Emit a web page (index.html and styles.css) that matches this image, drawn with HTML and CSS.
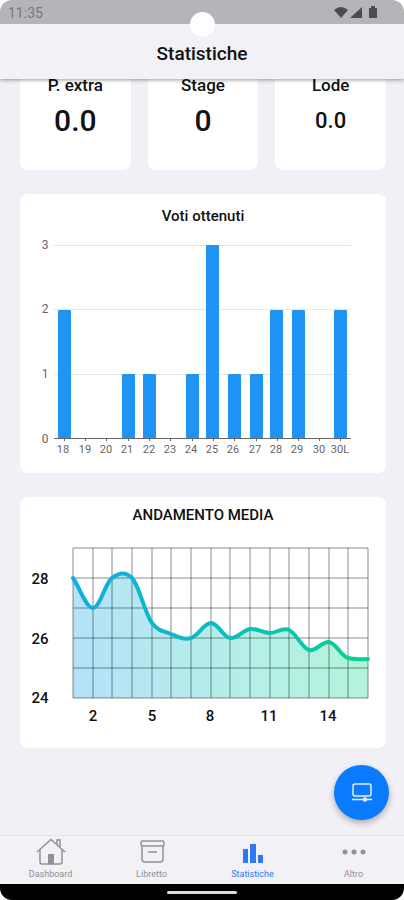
FILE: index.html
```
<!DOCTYPE html>
<html lang="it">
<head>
<meta charset="utf-8">
<meta name="viewport" content="width=device-width, initial-scale=1">
<title>Statistiche</title>
<link rel="stylesheet" href="styles.css">
</head>
<body>
<div class="screen">
  <div class="status">
    <span>11:35</span>
    <svg class="status-icons" width="46" height="16" viewBox="0 0 46 16" aria-hidden="true">
      <path d="M2 5Q9 -1 16 5L9 13Z"/>
      <path d="M30 2V13H18Z"/>
      <path d="M37 3h2V1h4v2h2v10h-8Z"/>
    </svg>
    <i class="camera"></i>
  </div>
  <header class="header"><h1>Statistiche</h1></header>

  <main class="content">
    <section class="stats">
      <article class="card stat"><h2>P. extra</h2><p>0.0</p></article>
      <article class="card stat"><h2>Stage</h2><p>0</p></article>
      <article class="card stat"><h2>Lode</h2><p class="small">0.0</p></article>
    </section>

    <section class="card grades">
      <h2>Voti ottenuti</h2>
      <svg class="chart" viewBox="0 0 366 245" role="img" aria-label="Voti ottenuti">
        <path class="rule" d="M34 17.500H331M34 81.500H331M34 146.500H331"/>
        <g class="bars">
          <path d="M38 211V83q0-1 1-1h11q1 0 1 1V211Z"/>
          <path d="M102 211V147q0-1 1-1h11q1 0 1 1V211Z"/>
          <path d="M123 211V147q0-1 1-1h11q1 0 1 1V211Z"/>
          <path d="M166 211V147q0-1 1-1h11q1 0 1 1V211Z"/>
          <path d="M186 211V18q0-1 1-1h11q1 0 1 1V211Z"/>
          <path d="M208 211V147q0-1 1-1h11q1 0 1 1V211Z"/>
          <path d="M230 211V147q0-1 1-1h11q1 0 1 1V211Z"/>
          <path d="M250 211V83q0-1 1-1h11q1 0 1 1V211Z"/>
          <path d="M272 211V83q0-1 1-1h11q1 0 1 1V211Z"/>
          <path d="M314 211V83q0-1 1-1h11q1 0 1 1V211Z"/>
        </g>
        <path class="axis" d="M34 210.500H331M44.500 211v2M65.500 211v2M86.500 211v2M108.500 211v2M129.500 211v2M150.500 211v2M172.500 211v2M193.500 211v2M214.500 211v2M236.500 211v2M257.500 211v2M278.500 211v2M299.500 211v2M320.500 211v2"/>
        <g class="values">
          <text x="25" y="21">3</text><text x="25" y="85">2</text><text x="25" y="150">1</text><text x="25" y="215">0</text>
        </g>
        <g class="ticks">
          <text x="43" y="225">18</text><text x="65" y="225">19</text><text x="86" y="225">20</text><text x="107" y="225">21</text><text x="129" y="225">22</text><text x="150" y="225">23</text><text x="171" y="225">24</text><text x="192" y="225">25</text><text x="213" y="225">26</text><text x="235" y="225">27</text><text x="256" y="225">28</text><text x="277" y="225">29</text><text x="299" y="225">30</text><text x="320" y="225">30L</text>
        </g>
      </svg>
    </section>

    <section class="card trend">
      <h2>ANDAMENTO MEDIA</h2>
      <svg class="chart" viewBox="0 0 366 221" role="img" aria-label="Andamento media">
        <defs>
          <linearGradient id="line" gradientUnits="userSpaceOnUse" x1="53" y1="0" x2="348" y2="0">
            <stop offset="0" stop-color="#12aee2"/><stop offset=".5" stop-color="#0bbdbd"/><stop offset="1" stop-color="#07d292"/>
          </linearGradient>
          <linearGradient id="area" gradientUnits="userSpaceOnUse" x1="53" y1="171" x2="348" y2="130">
            <stop offset="0" stop-color="#b4e1fa"/><stop offset=".3" stop-color="#b5e9ef"/><stop offset=".6" stop-color="#b5efe8"/><stop offset="1" stop-color="#b3f3da"/>
          </linearGradient>
        </defs>
        <path fill="url(#area)" d="M53 51C60 61 66 81 73 81S85 56 92 51S105 44 112 51S125 87 132 96S144 104 151 107S164 113 171 111S184 96 191 96S203 110 210 111S223 103 230 102S243 106 250 106S262 100 269 103S282 121 289 123S302 114 309 115S321 129 328 131S341 132 348 132V171H53Z"/>
        <path class="grid" d="M53 21H348M53 51H348M53 81H348M53 111H348M53 141H348M53 171H348M53 21V171M73 21V171M92 21V171M112 21V171M132 21V171M151 21V171M171 21V171M191 21V171M210 21V171M230 21V171M250 21V171M269 21V171M289 21V171M309 21V171M328 21V171M348 21V171"/>
        <path class="line" d="M53 51C60 61 66 81 73 81S85 56 92 51S105 44 112 51S125 87 132 96S144 104 151 107S164 113 171 111S184 96 191 96S203 110 210 111S223 103 230 102S243 106 250 106S262 100 269 103S282 121 289 123S302 114 309 115S321 129 328 131S341 132 348 132"/>
        <g class="labels">
          <text x="20" y="57">28</text><text x="20" y="117">26</text><text x="20" y="176">24</text>
          <text x="73" y="194">2</text><text x="132" y="194">5</text><text x="190" y="194">8</text><text x="249" y="194">11</text><text x="308" y="194">14</text>
        </g>
      </svg>
    </section>

    <button class="fab" type="button" aria-label="Cambia grafico">
      <svg width="24" height="24" viewBox="0 0 24 24" aria-hidden="true">
        <rect x="3" y="3" width="18" height="12" rx="2"/>
        <path d="M2 18.500H22"/><circle cx="15" cy="18.500" r="1.500"/>
      </svg>
    </button>
  </main>

  <nav class="tabs">
    <a href="#dashboard">
      <svg width="30" height="30" viewBox="0 0 30 30" aria-hidden="true">
        <path d="M1 16L15 3.500L29 16M4 14V26q0 2 2 2H24q2 0 2-2V14M21 8V4h3v7"/>
        <path class="solid" d="M12 18h6v10h-6Z"/>
      </svg>
      <span>Dashboard</span>
    </a>
    <a href="#libretto">
      <svg width="30" height="30" viewBox="0 0 30 30" aria-hidden="true">
        <rect x="4" y="5" width="23" height="5" rx="1.500"/>
        <path d="M5 10V23q0 3 3 3H23q3 0 3-3V10M11 16h9"/>
      </svg>
      <span>Libretto</span>
    </a>
    <a class="active" href="#statistiche">
      <svg width="30" height="30" viewBox="0 0 30 30" aria-hidden="true">
        <path class="solid" d="M5 13h5v14h-5ZM12 8h6v19h-6ZM20 19h5v8h-5Z"/>
      </svg>
      <span>Statistiche</span>
    </a>
    <a href="#altro">
      <svg width="30" height="30" viewBox="0 0 30 30" aria-hidden="true">
        <g class="dots"><circle cx="6" cy="16" r="2.500"/><circle cx="15" cy="16" r="2.500"/><circle cx="24" cy="16" r="2.500"/></g>
      </svg>
      <span>Altro</span>
    </a>
  </nav>
  <div class="system"><i></i></div>
</div>
</body>
</html>
```
FILE: styles.css
```
* { box-sizing: border-box; }
body { margin: 0; background: #fff; color: #111; font-family: Roboto, "Liberation Sans", sans-serif; }
h1, h2, p { margin: 0; font-weight: 500; text-align: center; }
.screen {
  display: flex;
  flex-direction: column;
  height: 100vh;
  overflow: hidden;
  border-radius: 12px;
  background: #f0f0f6;
}
.status {
  position: relative;
  z-index: 3;
  display: flex;
  flex: none;
  align-items: center;
  justify-content: space-between;
  height: 24px;
  padding: 2px 26px 0 8px;
  background: #b4b4b9;
  color: #78787c;
  font-size: 14px;
}
.status-icons { fill: #4c4c50; }
.camera {
  position: absolute;
  top: 12px;
  left: 50%;
  width: 25px;
  height: 25px;
  margin-left: -12px;
  border-radius: 50%;
  background: #fff;
}
.header {
  z-index: 2;
  display: flex;
  flex: none;
  align-items: center;
  justify-content: center;
  height: 55px;
  padding-top: 4px;
  background: #f1f1f6;
  box-shadow: 0 1px 4px rgba(0, 0, 0, .4);
}
.header h1 { font-size: 19px; line-height: 24px; }
.content {
  position: relative;
  display: flex;
  flex: 1;
  flex-direction: column;
  gap: 24px;
  min-height: 0;
  margin-top: -16px;
  padding: 0 18px 0 20px;
}
.card { flex: none; border-radius: 8px; background: #fff; }
.stats { display: grid; flex: none; grid-template-columns: repeat(3, 1fr); gap: 17px; }
.stat { height: 107px; padding-top: 12px; }
.stat h2 { font-size: 17px; line-height: 20px; }
.stat p { font-size: 30px; line-height: 52px; }
.stat .small { font-size: 22px; }
.grades { padding-top: 10px; }
.trend { padding-top: 6px; }
.grades h2, .trend h2 { font-size: 15px; line-height: 24px; }
.chart { display: block; width: 100%; height: auto; }
.rule { fill: none; stroke: #e6e6e6; }
.bars { fill: #2094f5; }
.axis { fill: none; stroke: #666; }
.values, .ticks, .labels { text-anchor: middle; }
.values { fill: #666; font-size: 12px; }
.ticks { fill: #666; font-size: 11px; }
.grid { fill: none; stroke: #102020; stroke-opacity: .5; }
.line { fill: none; stroke: url(#line); stroke-width: 4; stroke-linecap: round; }
.labels { fill: #111; font-size: 15px; font-weight: 500; }
.fab {
  position: absolute;
  right: 15px;
  bottom: 15px;
  display: grid;
  place-items: center;
  width: 55px;
  height: 55px;
  padding: 0;
  border: 0;
  border-radius: 50%;
  background: #0a7aff;
  box-shadow: 0 3px 6px rgba(0, 0, 0, .3);
}
.fab svg { fill: none; stroke: #e4f0ff; stroke-width: 1.5; }
.tabs {
  display: grid;
  flex: none;
  grid-template-columns: repeat(4, 1fr);
  height: 49px;
  border-top: 1px solid #e4e4e9;
  background: #f1f1f6;
}
.tabs a {
  display: flex;
  flex-direction: column;
  align-items: center;
  color: #929296;
  font-size: 9px;
  line-height: 16px;
  text-decoration: none;
}
.tabs .active { color: #2c78f5; }
.tabs svg { fill: none; stroke: currentColor; stroke-width: 1.5; }
.tabs .solid, .tabs .dots { fill: currentColor; stroke: none; }
.system { display: grid; flex: none; place-items: center; height: 16px; background: #000; }
.system i { width: 70px; height: 3px; border-radius: 2px; background: #ddd; }
```
